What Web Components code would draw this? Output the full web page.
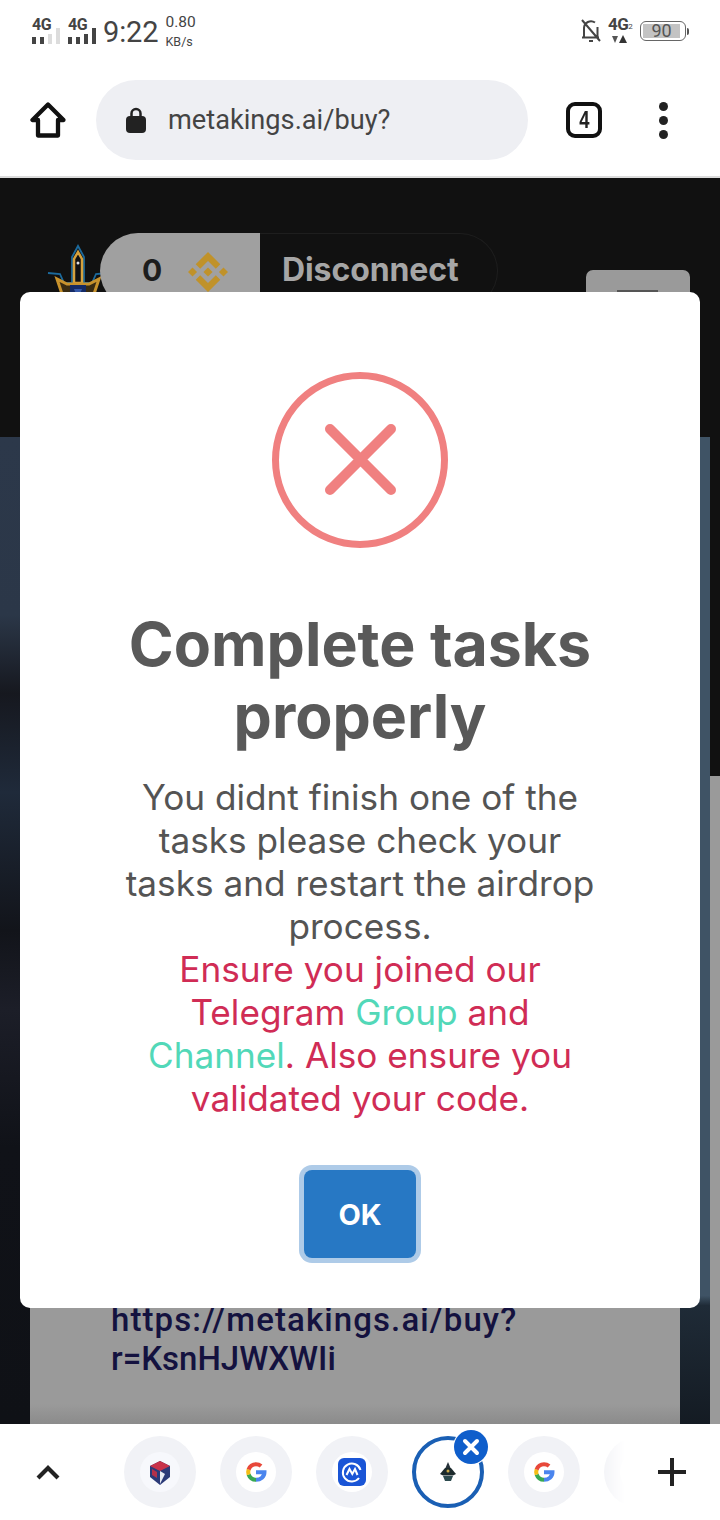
<!DOCTYPE html>
<html lang="en"><head><meta charset="utf-8"><title>metakings.ai/buy</title>
<style>
html,body{margin:0;padding:0;background:#fff}
body{width:720px;height:1520px;display:flex;flex-direction:column;overflow:hidden;font-family:Inter,"Liberation Sans",sans-serif}
svg{display:block}
</style></head><body>
<status-bar></status-bar>
<browser-bar url="metakings.ai/buy?" tabs="4"></browser-bar>
<site-page>
  <site-nav slot="nav"></site-nav>
  <site-body slot="body"><span style="letter-spacing:1.1px">https://metakings.ai/buy?</span><br>r=KsnHJWXWIi</site-body>
  <alert-modal slot="modal" heading="Complete tasks&#10;properly">
    You didnt finish one of the<br>tasks please check your<br>tasks and restart the airdrop<br>process.<br>
    <span class="r" style="color:#d02c55">Ensure you joined our<br>Telegram <span style="color:#52d8b8">Group</span> and<br><span style="color:#52d8b8">Channel</span>. Also ensure you<br>validated your code.</span>
  </alert-modal>
</site-page>
<tab-strip>
  <tab-dot tint><svg width="24" height="27" viewBox="0 0 24 27"><path d="M12 2l10 5v11l-10 8-10-8V7z" fill="#2b3a78"/><path d="M2 7l10 5 10-5-10-5z" fill="#c8324a"/><path d="M12 12l5 3-5 10z" fill="#e8ecf4"/><path d="M4 10l5 3v6l-5-3z" fill="#b4304a"/></svg></tab-dot>
  <tab-dot><svg width="30" height="30" viewBox="0 0 48 48" fill="none" stroke-width="6.500"><path d="M24 24.500h13.500c0 7-6 12-13.500 12" stroke="#4a85ee"/><path d="M24 36.500c-5.400 0-10-3.500-11.800-8.400" stroke="#38a852"/><path d="M12.200 28.100a12.600 12.600 0 0 1 0-8.200" stroke="#f5bd14"/><path d="M12.200 19.900C14 15 18.600 11.500 24 11.500c3.100 0 5.900 1.100 8.100 3" stroke="#e8483a"/></svg></tab-dot>
  <tab-dot><svg width="28" height="28" viewBox="0 0 28 28"><rect width="28" height="28" rx="6" fill="#1a55d6"/><path d="M21 20a9 9 0 1 1 1.500-8" fill="none" stroke="#fff" stroke-width="2"/><path d="M8.500 17l3-6 2.800 5 2.700-5 2.500 6" fill="none" stroke="#fff" stroke-width="2"/></svg></tab-dot>
  <tab-dot active><svg width="20" height="22" viewBox="0 0 20 22"><path d="M10 1l3 7H7z" fill="#27323a"/><path d="M2 13l5-6h6l5 6-3 1.500H5z" fill="#1c2a2c"/><path d="M5 15h10l-2 5H7z" fill="#2c4a4e"/><circle cx="10" cy="10" r="1.500" fill="#c9a94a"/></svg></tab-dot>
  <tab-dot><svg width="30" height="30" viewBox="0 0 48 48" fill="none" stroke-width="6.500"><path d="M24 24.500h13.500c0 7-6 12-13.500 12" stroke="#4a85ee"/><path d="M24 36.500c-5.400 0-10-3.500-11.800-8.400" stroke="#38a852"/><path d="M12.200 28.100a12.600 12.600 0 0 1 0-8.200" stroke="#f5bd14"/><path d="M12.200 19.900C14 15 18.600 11.500 24 11.500c3.100 0 5.900 1.100 8.100 3" stroke="#e8483a"/></svg></tab-dot>
  <tab-dot></tab-dot>
</tab-strip>
<script>
const def=(name,html)=>customElements.define(name,class extends HTMLElement{
  constructor(){super();this.attachShadow({mode:'open'}).innerHTML=typeof html==='function'?html(this):html}
});
const sig=(n)=>{const hs=[7,7,10,16];return `<span class="sig"><b>4G</b><svg width="28" height="16" viewBox="0 0 28 16">${hs.map((h,i)=>`<rect x="${i*8}" y="${16-h}" width="4" height="${h}" fill="${i<n?'#444':'#dcdcdc'}"/>`).join('')}</svg></span>`};
def('status-bar',`<style>
:host{display:flex;align-items:center;justify-content:space-between;height:62px;padding:0 32px;background:#fff;color:#444;font-family:Roboto,"Liberation Sans",sans-serif;box-sizing:border-box}
.g{display:flex;align-items:center}
.sig{display:flex;flex-direction:column;width:28px;height:28px;margin-right:8px;margin-top:-3px}
.sig:nth-child(2){margin-right:7px}
.sig b{font-size:16px;line-height:13px;letter-spacing:-.5px;color:#444;height:0;margin-top:2px;margin-bottom:10px}
.t{font-size:29px;line-height:32px;margin-right:7px;margin-top:2px;letter-spacing:-.1px}
.k{display:flex;flex-direction:column;font-size:15.500px;line-height:19px;margin-top:2px}
.k small{font-size:12.500px;line-height:19px}
.n{display:flex;flex-direction:column;align-items:flex-start;margin:0 10px 0 5px;width:22px;margin-top:-4px}
.n b{font-size:17px;line-height:16px;font-weight:700;white-space:nowrap;letter-spacing:-.5px}
.n b i{font-style:normal;font-size:8px;font-weight:400;vertical-align:1px}
.b{display:flex;align-items:center;margin-right:-1px}
.bb{box-sizing:border-box;width:46px;height:20px;border:1.500px solid #666;border-radius:6px;padding:2px 5px 2px 2px;display:flex}
.bb span{flex:1;background:#c3c3c3;font-size:18px;line-height:13px;text-align:center;color:#555}
.nub{width:2px;height:7px;background:#555;border-radius:0 2px 2px 0;margin-left:1px}
</style>
<div class="g">${sig(2)}${sig(4)}<span class="t">9:22</span><span class="k">0.80<small>KB/s</small></span></div>
<div class="g"><svg width="24" height="26" viewBox="0 0 24 26" fill="none" stroke="#444" stroke-width="2"><path d="M5 19V10a7 7 0 0 1 11-5.500M18.500 9v10M3 19.500h17M10 23h4M3 2l18 21"/></svg>
<span class="n"><b>4G<i>2</i></b><svg width="15" height="8" viewBox="0 0 15 8" style="margin-left:4px"><path d="M0 1h6L3 8z" fill="#555"/><path d="M11 0l4 8H7z" fill="#333"/></svg></span>
<span class="b"><span class="bb"><span>90</span></span><span class="nub"></span></span></div>`);

def('browser-bar',h=>`<style>
:host{display:flex;align-items:center;height:116px;box-sizing:border-box;padding:0 0 0 30px;background:#fff;border-bottom:2px solid #dcdcdc}
.u{margin-left:30px;width:432px;height:80px;border-radius:40px;background:#eeeff3;display:flex;align-items:center;padding-left:30px;box-sizing:border-box;margin-top:2px}
.u span{margin-left:22px;font:27.200px/32px Roboto,"Liberation Sans",sans-serif;color:#444}
.t{margin-left:38px;box-sizing:border-box;width:36px;height:36px;border:4px solid #111;border-radius:9px;font:700 23px/28px "Liberation Sans",sans-serif;text-align:center;color:#222;margin-top:2px}
.t span{display:inline-block;transform:scaleX(.8)}
.m{margin-left:57px;display:flex;flex-direction:column;gap:5px;margin-top:2px}
.m i{width:9px;height:9px;border-radius:50%;background:#222}
</style>
<svg width="36" height="36" viewBox="0 0 36 36" fill="none" stroke="#111" stroke-width="4.300" stroke-linejoin="round" style="margin-top:2px"><path d="M18 2.500L2.500 18h5.500V33.500h20V18h5.500z"/></svg>
<div class="u"><svg width="20" height="28" viewBox="0 0 20 28"><path d="M5.500 11V7.500a4.500 4.500 0 0 1 9 0V11" fill="none" stroke="#222" stroke-width="2.500"/><rect y="10" width="20" height="17" rx="4" fill="#222"/></svg><span>${h.getAttribute('url')}</span></div>
<div class="t"><span>${h.getAttribute('tabs')}</span></div>
<div class="m"><i></i><i></i><i></i></div>`);

def('site-page',`<style>
:host{display:flex;flex:1;position:relative;min-height:0;overflow:hidden;background:#111}
.main{width:710px;display:flex;flex-direction:column}
.bar{width:10px;display:flex;flex-direction:column}
.bar i{height:598px;background:#111}
.bar b{flex:1;background:#9a9a9a}
.modal{position:absolute;left:20px;top:114px;width:680px;display:block}
</style>
<div class="main"><slot name="nav"></slot><slot name="body"></slot></div>
<div class="bar"><i></i><b></b></div>
<div class="modal"><slot name="modal"></slot></div>`);

def('site-nav',`<style>
:host{display:flex;height:259px;box-sizing:border-box;padding:55px 0 0 47px;background:#111;align-items:flex-start;font-family:Inter,"Liberation Sans",sans-serif}
.logo{width:62px;height:70px;margin:10px -9px 0 0;flex:none}
.pill{display:flex;height:76px;width:398px;box-sizing:border-box;border-radius:38px 0 0 38px;position:relative}
.a{width:160px;background:#a0a0a0;border-radius:38px 0 0 38px;display:flex;align-items:center;padding:0 0 2px 42px;box-sizing:border-box;gap:26px;color:#1d1d1d;font-weight:700;font-size:30px}
.a svg{flex:none;margin-top:4px}
.b{flex:1;padding-left:22px;font-weight:700;font-size:32px;line-height:72px;color:#a6a6a6;letter-spacing:-.1px;border:1px solid #1e1e1e;border-left:0;border-radius:0 38px 38px 0}
.h{margin-left:88px;margin-top:37px;width:104px;height:60px;background:#9a9a9a;border-radius:7px;position:relative}
.h i{position:absolute;left:31px;top:20px;width:41px;height:2px;background:#555}
</style>
<svg class="logo" viewBox="0 0 62 70" fill="none"><path d="M1 30l12 1 4 9h8V14l6-11 6 11v26h8l4-9 12-1" stroke="#1c6a9c" stroke-width="1.800"/><path d="M31 9l-4 7v24h8V16z" stroke="#d6a13c" stroke-width="2.500"/><path d="M10 36l6 18h30l6-18-10 5H20z" fill="#3a2c12" stroke="#c8922c" stroke-width="3"/><path d="M23 42h16v22H23z" fill="#142a66"/><path d="M27 46h8l-4 10z" fill="#3558a8"/><circle cx="31" cy="20" r="1.500" fill="#e0e0e0"/></svg>
<div class="pill"><div class="a"><span>0</span><svg width="40" height="40" viewBox="0 0 126.610 126.610" fill="#c0922a"><path d="M38.730 53.200l24.590-24.580 24.600 24.600 14.300-14.310L63.320 0 24.420 38.900zM0 63.310l14.300-14.310 14.310 14.310-14.310 14.300zM38.730 73.410l24.590 24.590 24.600-24.600 14.310 14.290-38.900 38.910-38.910-38.880zM98 63.310l14.300-14.310 14.310 14.300-14.310 14.320zM77.830 63.300L63.320 48.780 52.590 59.510l-1.240 1.230-2.540 2.540 14.510 14.500 14.510-14.470z"/></svg></div><div class="b">Disconnect</div></div>
<div class="h"><i></i></div>`);

def('site-body',`<style>
:host{display:flex;flex:1;min-height:0;overflow:hidden;font-family:Roboto,"Liberation Sans",sans-serif}
.l{width:30px;background:linear-gradient(180deg,#2c384a 0,#2b3748 18%,#16181f 26%,#1f2a3a 36%,#12141a 50%,#1c1e28 58%,#101218 72%,#0f1116 100%)}
.r{width:30px;background:linear-gradient(180deg,#3f5365 0,#3f5365 87%,#1f2b37 88%,#141b23 100%);}
.c{flex:1;background:linear-gradient(180deg,#9a9a9a 0,#9a9a9a 98%,#8b8b8b 100%);padding:863px 0 0 81px;font-size:33px;line-height:39px;font-weight:500;color:#14123f;white-space:nowrap}
</style><div class="l"></div><div class="c"><slot></slot></div><div class="r"></div>`);

def('alert-modal',h=>`<style>
:host{display:block;box-sizing:border-box;background:#fff;border-radius:10px;text-align:center;padding:80px 0 50px;font-family:Inter,"Liberation Sans",sans-serif;color:#545454}
svg{margin:0 auto}
h2{margin:56px 0 0;font-size:60.800px;line-height:72px;font-weight:700;color:#595959;white-space:pre-line;letter-spacing:0}
.p{margin-top:24px;font-size:35.200px;line-height:43px;font-weight:400}
button{display:block;margin:50px auto 0;width:112px;height:88px;border:0;border-radius:8px;background:#2778c4;color:#fff;font:700 29px Inter,"Liberation Sans",sans-serif;box-shadow:0 0 0 5px #aecbe8}
</style>
<svg width="176" height="176" viewBox="0 0 176 176" fill="none" stroke="#f08080"><circle cx="88" cy="88" r="84.500" stroke-width="7"/><path d="M58 57L119 118M119 57L58 118" stroke-width="10" stroke-linecap="round"/></svg>
<h2>${h.getAttribute('heading')}</h2>
<div class="p"><slot></slot></div>
<button>OK</button>`);

def('tab-strip',`<style>
:host{display:flex;align-items:center;height:96px;background:#fff;position:relative;flex:none}
.up{margin-left:36px}
.s{margin-left:64px;width:516px;height:96px;display:flex;align-items:center;gap:24px;-webkit-mask-image:linear-gradient(90deg,#000 0,#000 92%,transparent 97%);mask-image:linear-gradient(90deg,#000 0,#000 92%,transparent 97%)}
.plus{margin-left:17px}
</style>
<svg class="up" width="24" height="16" viewBox="0 0 24 16" fill="none" stroke="#222" stroke-width="4.200"><path d="M2 14L12 4l10 10"/></svg>
<div class="s"><slot></slot></div>
<svg class="plus" width="30" height="30" viewBox="0 0 30 30" fill="none" stroke="#222" stroke-width="4"><path d="M15 1v28M1 15h28"/></svg>`);

def('tab-dot',h=>{const a=h.hasAttribute('active');return `<style>
:host{display:flex;flex:none;width:72px;height:72px;border-radius:50%;box-sizing:border-box;align-items:center;justify-content:center;position:relative;background:${a?'#fff':'#f1f2f6'};${a?'border:4px solid #1a5fb4;':''}}
.i{width:40px;height:40px;border-radius:50%;background:${h.hasAttribute('tint')?'#f7f8fc':'#fff'};display:flex;align-items:center;justify-content:center}
.x{position:absolute;right:-8px;top:-10px;width:34px;height:34px;border-radius:50%;background:#0f5ecb;display:flex;align-items:center;justify-content:center;box-shadow:0 0 0 1px #fff}
</style><div class="i"><slot></slot></div>${a?'<div class="x"><svg width="18" height="18" viewBox="0 0 18 18" fill="none" stroke="#fff" stroke-width="4" stroke-linecap="round"><path d="M3 3l12 12M15 3L3 15"/></svg></div>':''}`});
</script>
</body></html>
